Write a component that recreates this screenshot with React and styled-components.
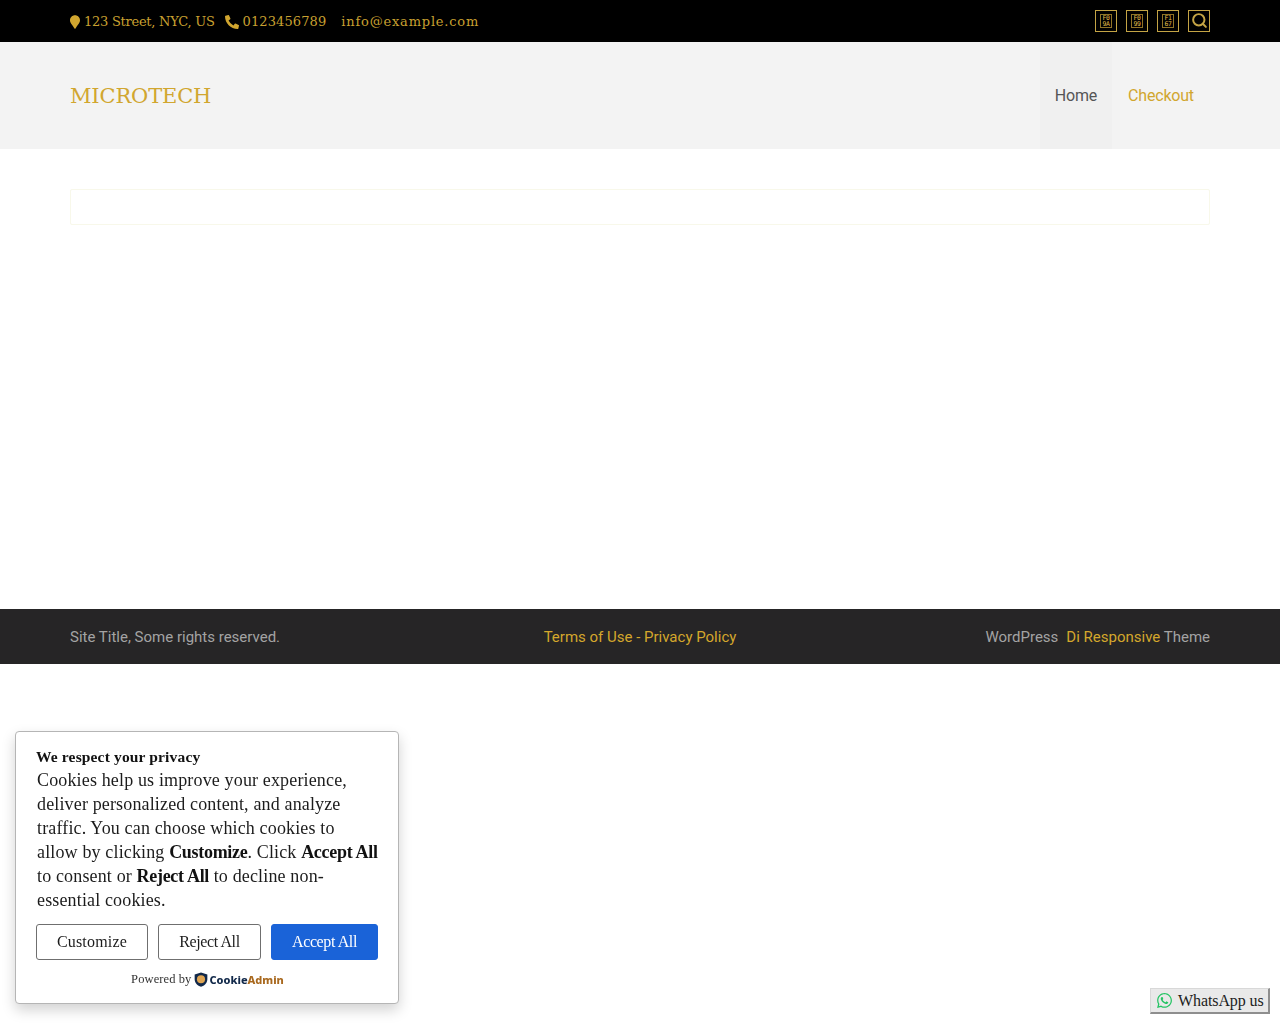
import styled, { createGlobalStyle } from 'styled-components';
import { FaMapMarker, FaPhoneAlt, FaWhatsapp } from 'react-icons/fa';
import { Search } from 'lucide-react';

const gold = '#d1a62f';

const GlobalStyle = createGlobalStyle`
  html, body {
    margin: 0;
    padding: 0;
    background: #fff;
  }
  * {
    box-sizing: border-box;
  }
`;

const TopBar = styled.div`
  height: 42px;
  background: #000;
  padding: 0 70px;
  display: flex;
  justify-content: space-between;
  align-items: center;
`;

const Contact = styled.div`
  display: flex;
  align-items: center;
  color: #c9a030;
  font-family: "DejaVu Serif", serif;
  font-size: 13px;
  padding-top: 1px;
`;

const ContactItem = styled.span`
  display: flex;
  align-items: center;
  gap: 4px;
  margin-right: ${(p) => p.$gap}px;
  letter-spacing: ${(p) => p.$spacing}px;
  svg {
    width: ${(p) => p.$icon}px;
    height: 14px;
    flex-shrink: 0;
    color: ${gold};
  }
`;

const Social = styled.div`
  display: flex;
  gap: 9px;
  margin-top: -1px;
`;

const SocialBox = styled.a`
  width: 22px;
  height: 22px;
  border: 1px solid #c4a445;
  display: flex;
  align-items: center;
  justify-content: center;
  color: #c4a445;
  svg {
    width: 17px;
    height: 17px;
  }
`;

const Tofu = styled.span`
  width: 12px;
  height: 14px;
  padding-top: 0;
  border: 1px solid #8f7326;
  color: #e0bb4a;
  font-family: "DejaVu Sans Mono", monospace;
  font-size: 6.5px;
  line-height: 6px;
  text-align: center;
  letter-spacing: -0.3px;
  white-space: pre;
`;

const Header = styled.header`
  height: 107px;
  background: #f3f3f3;
  padding: 0 70px;
  display: flex;
  justify-content: space-between;
  align-items: stretch;
`;

const Logo = styled.a`
  align-self: center;
  padding-top: 1px;
  color: ${gold};
  font-family: "DejaVu Serif", serif;
  font-size: 21px;
  letter-spacing: -0.15px;
`;

const Nav = styled.nav`
  display: flex;
`;

const NavItem = styled.a`
  display: flex;
  align-items: center;
  justify-content: center;
  width: ${(p) => p.$width}px;
  background: ${(p) => (p.$active ? '#f0f0f0' : 'transparent')};
  color: ${(p) => (p.$active ? '#555' : gold)};
  font-family: "Roboto", sans-serif;
  font-size: 16px;
  letter-spacing: -0.2px;
`;

const Main = styled.main`
  height: 460px;
  padding: 40px 70px 0;
`;

const EmptyPanel = styled.div`
  height: 36px;
  border: 1px solid #f8f8ea;
  border-radius: 2px;
`;

const Footer = styled.footer`
  height: 55px;
  background: #262526;
  padding: 0 70px;
  display: grid;
  grid-template-columns: 1fr auto 1fr;
  align-items: center;
  color: #a3a3a3;
  font-family: "Roboto", sans-serif;
  font-size: 15px;
`;

const FooterRight = styled.div`
  text-align: right;
`;

const FooterLink = styled.a`
  color: #d4a72c;
  margin-left: ${(p) => p.$left || 0}px;
`;

const CookieCard = styled.div`
  position: fixed;
  left: 15px;
  top: 731px;
  width: 384px;
  height: 273px;
  padding: 14px 20px 0 21px;
  background: #fff;
  border: 1px solid #b5b5b5;
  border-radius: 4px;
  box-shadow: 0 6px 14px rgba(0, 0, 0, 0.18);
  font-family: "Liberation Serif", serif;
  color: #1c1c1c;
`;

const CookieTitle = styled.div`
  margin: 0 0 1px -1px;
  font-size: 15.5px;
  line-height: 21px;
  font-weight: 700;
  color: #111;
  letter-spacing: 0.15px;
`;

const CookieText = styled.p`
  margin: 0;
  font-size: 18px;
  line-height: 24px;
  letter-spacing: 0.15px;
  strong {
    font-weight: 700;
    color: #111;
    letter-spacing: -0.3px;
  }
`;

const ButtonRow = styled.div`
  display: flex;
  gap: 10px;
  margin: 12px 0 0 -1px;
`;

const CookieButton = styled.button`
  width: ${(p) => p.$width}px;
  height: 36px;
  padding: 0;
  border: 1px solid ${(p) => (p.$primary ? '#1a63d8' : '#6f6f6f')};
  border-radius: 3px;
  background: ${(p) => (p.$primary ? '#1a63d8' : '#fff')};
  color: ${(p) => (p.$primary ? '#fff' : '#1c1c1c')};
  font-family: "Liberation Serif", serif;
  font-size: 16px;
  letter-spacing: ${(p) => p.$spacing}px;
`;

const PoweredBy = styled.div`
  display: flex;
  justify-content: center;
  align-items: center;
  margin-top: 12px;
  font-size: 12.5px;
  color: #333;
  letter-spacing: 0.1px;
  svg {
    width: 14px;
    height: 15px;
    margin: 0 1px 0 3px;
  }
`;

const BrandName = styled.span`
  font-family: "Noto Sans", sans-serif;
  font-size: 11px;
  font-weight: 800;
  color: #12294a;
  letter-spacing: 0;
`;

const BrandAccent = styled.span`
  color: #a9691f;
`;

const WhatsAppButton = styled.a`
  position: fixed;
  left: 1150px;
  top: 988px;
  width: 120px;
  height: 26px;
  padding: 0 0 0 5px;
  display: flex;
  align-items: center;
  gap: 5px;
  background: #e9e9e9;
  border-top: 1px solid #d8d8d8;
  border-left: 1px solid #d8d8d8;
  border-right: 2px solid #8e8e8e;
  border-bottom: 2px solid #8e8e8e;
  color: #1c1c1c;
  font-family: "Liberation Serif", serif;
  font-size: 16px;
  letter-spacing: -0.1px;
  white-space: nowrap;
  svg {
    width: 17px;
    height: 17px;
    flex-shrink: 0;
    color: #25c464;
  }
`;

const ShieldLogo = () => (
  <svg viewBox="0 0 24 26">
    <path d="M12 1 L23 4.5 V12 C23 19 18 23.5 12 25.5 C6 23.5 1 19 1 12 V4.5 Z" fill="#12294a" />
    <circle cx="12" cy="12.5" r="7" fill="#e0a552" />
  </svg>
);

export default function App() {
  return (
    <>
      <GlobalStyle />
      <TopBar>
        <Contact>
          <ContactItem $gap={10} $icon={10} $spacing={-0.26}><FaMapMarker />123 Street, NYC, US</ContactItem>
          <ContactItem $gap={15} $icon={14} $spacing={0.1}><FaPhoneAlt />0123456789</ContactItem>
          <ContactItem $gap={0} $icon={0} $spacing={0.8}>info@example.com</ContactItem>
        </Contact>
        <Social>
          <SocialBox><Tofu>{'F0\n9A'}</Tofu></SocialBox>
          <SocialBox><Tofu>{'F0\n99'}</Tofu></SocialBox>
          <SocialBox><Tofu>{'F1\n67'}</Tofu></SocialBox>
          <SocialBox><Search strokeWidth={2.8} /></SocialBox>
        </Social>
      </TopBar>
      <Header>
        <Logo>MICROTECH</Logo>
        <Nav>
          <NavItem $active $width={72}>Home</NavItem>
          <NavItem $width={98}>Checkout</NavItem>
        </Nav>
      </Header>
      <Main>
        <EmptyPanel />
      </Main>
      <Footer>
        <div>Site Title, Some rights reserved.</div>
        <div>
          <FooterLink>Terms of Use</FooterLink>
          <FooterLink> - </FooterLink>
          <FooterLink>Privacy Policy</FooterLink>
        </div>
        <FooterRight>
          WordPress<FooterLink $left={8}>Di Responsive</FooterLink> Theme
        </FooterRight>
      </Footer>
      <CookieCard>
        <CookieTitle>We respect your privacy</CookieTitle>
        <CookieText>
          Cookies help us improve your experience, deliver personalized content, and analyze
          traffic. You can choose which cookies to allow by clicking <strong>Customize</strong>.
          Click <strong>Accept All</strong> to consent or <strong>Reject All</strong> to decline
          non-essential cookies.
        </CookieText>
        <ButtonRow>
          <CookieButton $width={112} $spacing={0.2}>Customize</CookieButton>
          <CookieButton $width={103} $spacing={-0.4}>Reject All</CookieButton>
          <CookieButton $width={107} $spacing={-0.4} $primary>Accept All</CookieButton>
        </ButtonRow>
        <PoweredBy>
          Powered by <ShieldLogo />
          <BrandName>Cookie<BrandAccent>Admin</BrandAccent></BrandName>
        </PoweredBy>
      </CookieCard>
      <WhatsAppButton><FaWhatsapp />WhatsApp us</WhatsAppButton>
    </>
  );
}
